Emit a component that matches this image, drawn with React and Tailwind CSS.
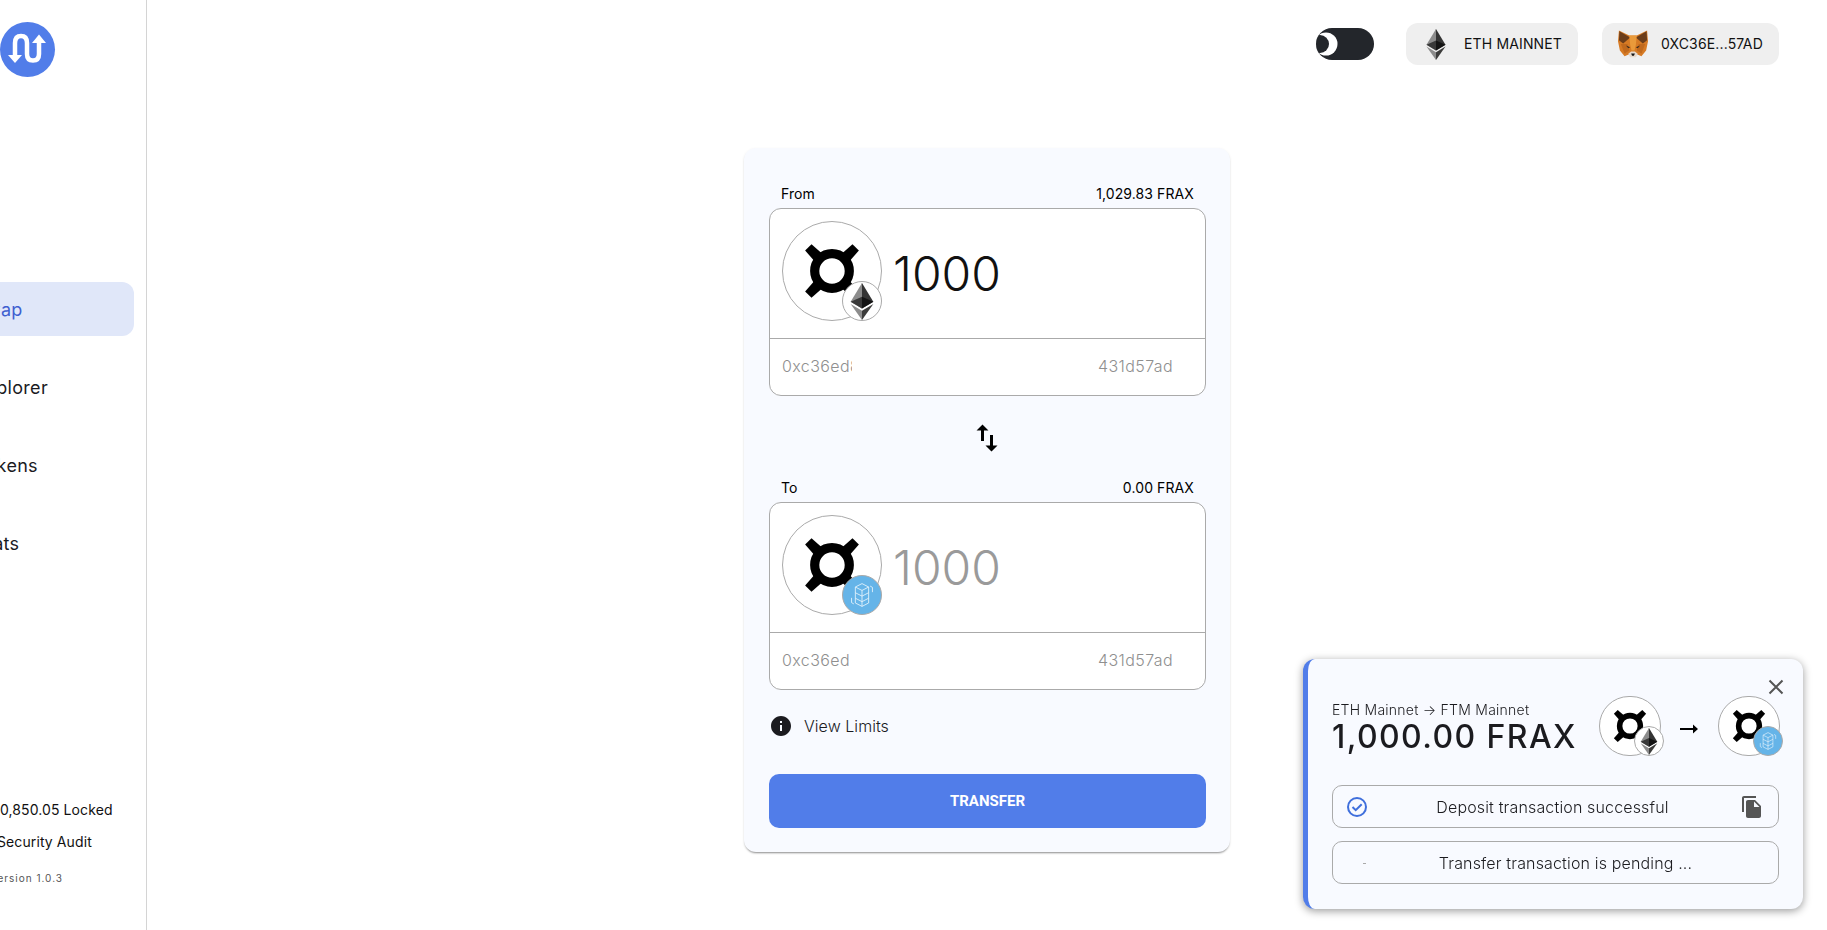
const Eth = ({ className }) => (
  <svg viewBox="0 0 256 417" className={className}>
    <polygon fill="#343434" points="127.96,0 125.17,9.5 125.17,285.17 127.96,287.96 255.92,212.32" />
    <polygon fill="#8C8C8C" points="127.96,0 0,212.32 127.96,287.96 127.96,154.16" />
    <polygon fill="#3C3C3B" points="127.96,312.19 126.39,314.11 126.39,412.31 127.96,416.91 256,236.59" />
    <polygon fill="#8C8C8C" points="127.96,416.91 127.96,312.19 0,236.59" />
    <polygon fill="#141414" points="127.96,287.96 255.92,212.32 127.96,154.16" />
    <polygon fill="#393939" points="0,212.32 127.96,287.96 127.96,154.16" />
  </svg>
);

const Fantom = ({ className }) => (
  <svg viewBox="0 0 40 40" className={className} fill="none" stroke="#e8f4fc" strokeWidth="0.9" strokeLinejoin="round">
    <path d="M20 8l7 3.6v16.8L20 32l-7-3.6V11.6z" />
    <path d="M13 11.6l7 3.6 7-3.6M20 15.2v6M13 17.6l7 3.6 7-3.6M13 23.4l7 3.6 7-3.6M20 21.2V32" />
    <path d="M9 23v5l2.4 1.4M31 17v-5l-2.4-1.4" />
  </svg>
);

const Frax = ({ className }) => (
  <svg viewBox="0 0 100 100" className={className}>
    {[45, 135, 225, 315].map((a) => (
      <polygon key={a} fill="#000000" points="45.500,16.500 54.500,16.500 55.500,32 44.500,32" transform={`rotate(${a} 50 50)`} />
    ))}
    <circle cx="50" cy="50" r="17.300" fill="#ffffff" stroke="#000000" strokeWidth="9.200" />
  </svg>
);

const Fox = ({ className }) => (
  <svg viewBox="0 0 32 30" className={className}>
    <polygon fill="#d67a24" points="1,0.5 12,6 20,6 31,0.5 32,12 30,22 25,28 20,26 12,26 7,28 2,22 0,12" />
    <polygon fill="#6b3d1a" points="1.500,1.500 13,8 5.500,14.500 1,11" />
    <polygon fill="#6b3d1a" points="30.500,1.500 19,8 26.500,14.500 31,11" />
    <polygon fill="#ea9a3a" points="12,6 20,6 19,16 17.500,22 14.500,22 13,16" />
    <polygon fill="#c0691d" points="3,15 10,15 12,22 7,25" />
    <polygon fill="#c0691d" points="29,15 22,15 20,22 25,25" />
    <polygon fill="#3a2a1e" points="8.500,16.500 13,18.500 11,19.500" />
    <polygon fill="#3a2a1e" points="23.500,16.500 19,18.500 21,19.500" />
    <polygon fill="#e6d9cc" points="11,25.500 14,23 18,23 21,25.500 19,29 13,29" />
    <polygon fill="#161616" points="14,25 18,25 17,27.500 15,27.500" />
  </svg>
);

const Token = ({ big, fantom }) => (
  <div className={big ? "relative w-[100px] h-[100px] shrink-0" : "relative w-[65px] h-[60px] shrink-0"}>
    <div className={big ? "w-[100px] h-[100px] rounded-full border border-[#aaaaaa] bg-white flex items-center justify-center" : "w-[62px] h-[60px] rounded-full border border-[#aaaaaa] bg-white flex items-center justify-center"}>
      <Frax className={big ? "w-[100px] h-[100px] shrink-0" : "w-[60px] h-[60px] shrink-0"} />
    </div>
    {fantom ? (
      <div className={big ? "absolute right-0 bottom-0 w-[40px] h-[40px] rounded-full bg-[#65b4e8] border border-[#aaaaaa]" : "absolute right-0 bottom-0 w-[30px] h-[30px] rounded-full bg-[#65b4e8] border border-[#aaaaaa]"}>
        <Fantom className="w-full h-full" />
      </div>
    ) : (
      <div className={big ? "absolute right-0 bottom-0 w-[40px] h-[40px] rounded-full bg-white border border-[#aaaaaa] flex items-center justify-center" : "absolute right-0 bottom-0 w-[30px] h-[30px] rounded-full bg-white border border-[#aaaaaa] flex items-center justify-center"}>
        <Eth className={big ? "w-[24px] h-[37px]" : "w-[18px] h-[27px]"} />
      </div>
    )}
  </div>
);

const TokenBox = ({ label, balance, amountClass, clipClass, fantom }) => (
  <div>
    <div className="flex justify-between items-center h-[20px] pl-[12px] pr-[12px] mb-[5px] text-[14px] font-normal tracking-[0.1px] text-black">
      <span>{label}</span>
      <span>{balance}</span>
    </div>
    <div className="h-[188px] rounded-[12px] border border-[#aaaaaa] bg-white">
      <div className="h-[130px] border-b border-[#aaaaaa] pt-[12px] pl-[12px] flex items-start">
        <Token big fantom={fantom} />
        <div className={amountClass}>1000</div>
      </div>
      <div className="h-[53px] flex items-center pl-[12px] pr-[32px] text-[16px] font-light tracking-[0.4px] text-[#8f8f8f]">
        <span className={clipClass}>0xc36ed8a1c9</span>
        <span className="ml-auto">431d57ad</span>
      </div>
    </div>
  </div>
);

const NavItem = ({ label, active, textClass }) => (
  <div className={active ? "h-[54px] w-[154px] -ml-[20px] pt-[1px] rounded-[12px] bg-[#e0e7f9] text-[#3f5fd0] flex items-center text-[18px] tracking-[0.3px]" : "h-[54px] pt-[1px] flex items-center text-[18px] tracking-[0.3px] text-[#1b1b1f]"}>
    <span className={textClass}>{label}</span>
  </div>
);

export default function App() {
  return (
    <div className="h-screen w-full overflow-hidden flex bg-white font-['Inter',sans-serif] text-[#1b1b1f]">
      <aside className="w-[147px] h-full shrink-0 border-r border-[#d4d4d4] overflow-hidden flex flex-col">
        <div className="pt-[22px]">
          <div className="w-[55px] h-[55px] rounded-full bg-[#517de9] flex items-center justify-center">
            <svg viewBox="0 0 55 55" className="w-[55px] h-[55px]" fill="none">
              <path d="M15 34V21c0-5 2.500-7 6-7s6 2 6 7v11c0 5 2.500 6.500 6 6.500s6-1.500 6-6.500V20" stroke="#ffffff" strokeWidth="4.500" />
              <polygon fill="#ffffff" points="8,33 22,33 15,41" />
              <polygon fill="#ffffff" points="32,21 46,21 39,12.500" />
            </svg>
          </div>
        </div>
        <nav className="mt-[205px] flex flex-col gap-[24px]">
          <NavItem label="Swap" active textClass="-ml-[6px]" />
          <NavItem label="Explorer" textClass="-ml-[25px]" />
          <NavItem label="Tokens" textClass="-ml-[25px]" />
          <NavItem label="Stats" textClass="-ml-[25px]" />
        </nav>
        <div className="mt-auto pb-[46px] flex flex-col whitespace-nowrap">
          <span className="h-[20px] leading-[20px] text-[14px] font-normal tracking-[0.1px] text-[#111111] -ml-[15px] mb-[12px]">$10,850.05 Locked</span>
          <span className="h-[20px] leading-[20px] text-[14px] font-normal tracking-[0.1px] text-[#111111] -ml-[3px] mb-[20px]">Security Audit</span>
          <span className="h-[12px] leading-[12px] text-[10px] tracking-[1px] text-[#555555] -ml-[10px]">Version 1.0.3</span>
        </div>
      </aside>

      <main className="flex-1 flex flex-col min-w-0">
        <header className="h-[148px] shrink-0 pt-[23px] pr-[48px] flex items-start justify-end">
          <div className="mt-[5px] mr-[32px] w-[58px] h-[32px] rounded-full bg-[#23262b] overflow-hidden">
            <svg viewBox="0 0 58 32" className="w-[58px] h-[32px]">
              <circle cx="10" cy="16" r="11.500" fill="#ffffff" />
              <circle cx="4" cy="16" r="9" fill="#23262b" />
            </svg>
          </div>
          <div className="h-[42px] w-[172px] mr-[24px] pb-[2px] rounded-[12px] bg-[#efefef] flex items-center pl-[20px] text-[14px] font-normal tracking-[0.15px] text-[#111111]">
            <Eth className="w-[20px] h-[31px] mt-[2px]" />
            <span className="ml-[18px]">ETH MAINNET</span>
          </div>
          <div className="h-[42px] w-[177px] pb-[2px] rounded-[12px] bg-[#efefef] flex items-center pl-[16px] text-[14px] font-normal tracking-[0.15px] text-[#111111]">
            <Fox className="w-[30px] h-[30px] mt-[2px]" />
            <span className="ml-[13px]">0XC36E...57AD</span>
          </div>
        </header>

        <div className="flex justify-center">
          <section className="w-[486px] h-[704px] rounded-[12px] bg-[#f8faff] shadow-[0_2px_2px_-1px_rgba(0,0,0,0.4),0_1px_3px_rgba(0,0,0,0.08)] pl-[25px] pr-[24px] pt-[35px]">
            <TokenBox label="From" balance="1,029.83 FRAX" amountClass="ml-[11px] mt-[24px] text-[48px] leading-[58px] font-light text-[#111111]" clipClass="w-[70px] overflow-hidden whitespace-nowrap" />
            <div className="h-[81px] pt-[2px] pr-[2px] flex items-center justify-center">
              <svg viewBox="0 0 24 24" className="w-[36px] h-[36px]" fill="#000000">
                <path d="M16 17.01V10h-2v7.01h-3L15 21l4-3.990h-3zM9 3L5 6.990h3V14h2V6.990h3L9 3z" />
              </svg>
            </div>
            <TokenBox fantom label="To" balance="0.00 FRAX" amountClass="ml-[11px] mt-[24px] text-[48px] leading-[58px] font-light text-[#9a9a9a]" clipClass="w-[67px] overflow-hidden whitespace-nowrap" />
            <div className="h-[84px] pb-[13px] flex items-center text-[16px] font-light tracking-[0.05px] text-[#1b1b1f]">
              <svg viewBox="0 0 24 24" className="w-[24px] h-[24px]" fill="#1b1b1f">
                <path d="M12 2C6.480 2 2 6.480 2 12s4.480 10 10 10 10-4.480 10-10S17.520 2 12 2zm1 15h-2v-6h2v6zm0-8h-2V7h2v2z" />
              </svg>
              <span className="ml-[11px]">View Limits</span>
            </div>
            <button className="w-full h-[54px] rounded-[10px] bg-[#517de9] text-white text-[15px] font-bold font-['Roboto',sans-serif] flex items-center justify-center">TRANSFER</button>
          </section>
        </div>
      </main>

      <div className="fixed left-[1303px] top-[659px] w-[500px] h-[250px] rounded-[12px] bg-[#f8faff] border-l-[5px] border-[#517de9] shadow-[0_2px_8px_rgba(0,0,0,0.4)] pl-[24px] pr-[20px]">
        <svg viewBox="0 0 24 24" className="absolute right-[15px] top-[16px] w-[24px] h-[24px]" fill="none" stroke="#555555" strokeWidth="2">
          <path d="M5.500 5.500l13 13M18.500 5.500l-13 13" />
        </svg>
        <div className="h-[126px] flex items-start">
          <div className="mt-[42px] w-[267px] whitespace-nowrap">
            <div className="text-[14px] leading-[17px] font-light tracking-[0.25px] text-[#1b1b1f]">ETH Mainnet → FTM Mainnet</div>
            <div className="text-[32px] leading-[37px] font-medium tracking-[1.4px] text-[#1b1b1f]">1,000.00 FRAX</div>
          </div>
          <div className="mt-[37px]"><Token /></div>
          <svg viewBox="0 0 18 10" className="w-[18px] h-[10px] mt-[65px] ml-[16px] mr-[20px]" fill="#000000">
            <path d="M0 4h13V0.500L18 5l-5 4.500V6H0z" />
          </svg>
          <div className="mt-[37px]"><Token fantom /></div>
        </div>
        <div className="w-[447px] h-[43px] rounded-[10px] border border-[#aaaaaa] flex items-center relative">
          <svg viewBox="0 0 24 24" className="absolute left-[12px] top-[9px] w-[24px] h-[24px]" fill="none" stroke="#3f6fdc" strokeWidth="2">
            <circle cx="12" cy="12" r="9" />
            <path d="M7.500 12l3.200 3.200 6-6" />
          </svg>
          <span className="flex-1 text-center text-[16px] font-light tracking-[0.15px] pr-[6px]">Deposit transaction successful</span>
          <svg viewBox="0 0 24 24" className="absolute right-[14px] top-[9px] w-[24px] h-[24px]" fill="#555555">
            <path d="M16 1H4c-1.100 0-2 .9-2 2v14h2V3h12V1zm-1 4l6 6v10c0 1.100-.9 2-2 2H7.990C6.890 23 6 22.100 6 21l.010-14c0-1.100.89-2 1.990-2h7zm-1 7h5.500L14 6.500V12z" />
          </svg>
        </div>
        <div className="w-[447px] h-[43px] mt-[13px] rounded-[10px] border border-[#aaaaaa] flex items-center relative">
          <div className="absolute left-[30px] top-[21px] w-[3px] h-[1px] bg-[#aaaaaa]"></div>
          <span className="flex-1 text-center text-[16px] font-light tracking-[0.15px] pl-[20px]">Transfer transaction is pending ...</span>
        </div>
      </div>
    </div>
  );
}
